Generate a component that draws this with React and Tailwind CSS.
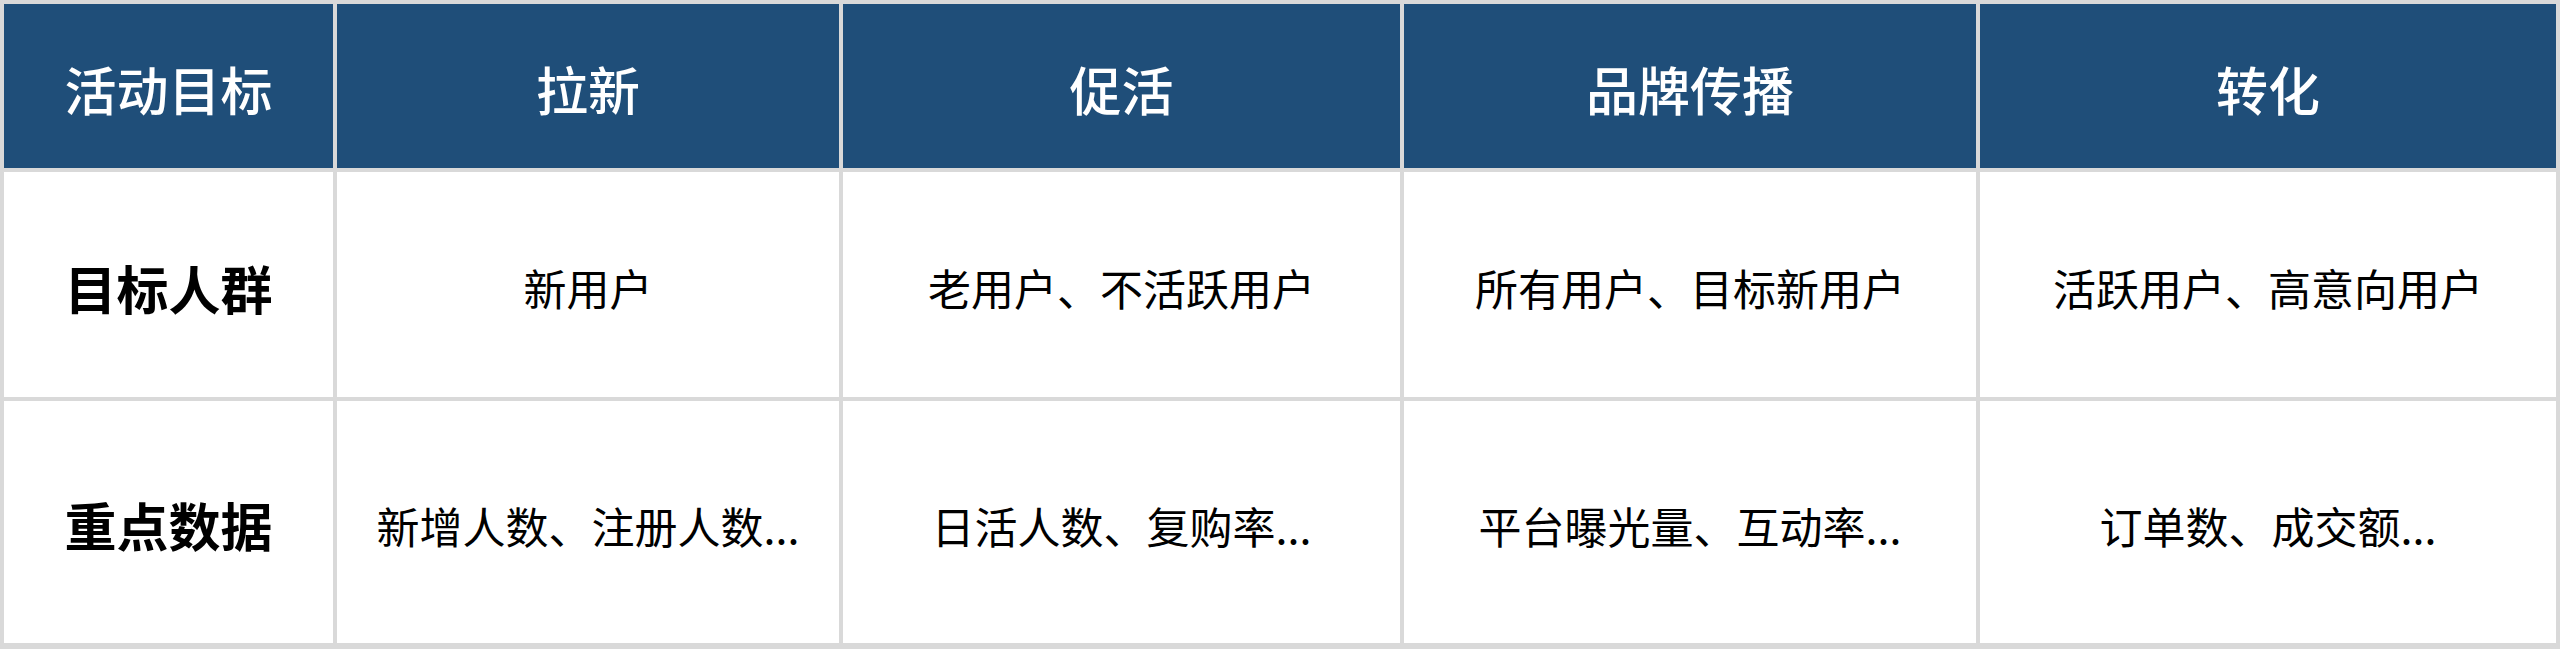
import { Fragment } from "react";

const HEADERS = ["活动目标", "拉新", "促活", "品牌传播", "转化"];

const ROWS = [
  { label: "目标人群", cells: ["新用户", "老用户、不活跃用户", "所有用户、目标新用户", "活跃用户、高意向用户"] },
  { label: "重点数据", cells: ["新增人数、注册人数...", "日活人数、复购率...", "平台曝光量、互动率...", "订单数、成交额..."] },
];

export default function App() {
  return (
    <div
      className="w-[2560px] h-[649px] bg-[#d9d9d9] p-[4px] grid grid-cols-[329px_502px_557px_572px_576px] grid-rows-[164px_225px_242px] gap-[4px]"
      style={{ fontFamily: '"Noto Sans CJK SC", "Noto Sans", sans-serif' }}
    >
      {HEADERS.map((h) => (
        <div key={h} className="bg-[#1f4e79] text-white text-[52px] font-medium flex items-center justify-center pt-[6px]">
          {h}
        </div>
      ))}
      {ROWS.map((row) => (
        <Fragment key={row.label}>
          <div className="bg-white text-black text-[52px] font-bold flex items-center justify-center pt-[6px]">
            {row.label}
          </div>
          {row.cells.map((c) => (
            <div key={c} className="bg-white text-black text-[43px] flex items-center justify-center pt-[6px]">
              {c}
            </div>
          ))}
        </Fragment>
      ))}
    </div>
  );
}
